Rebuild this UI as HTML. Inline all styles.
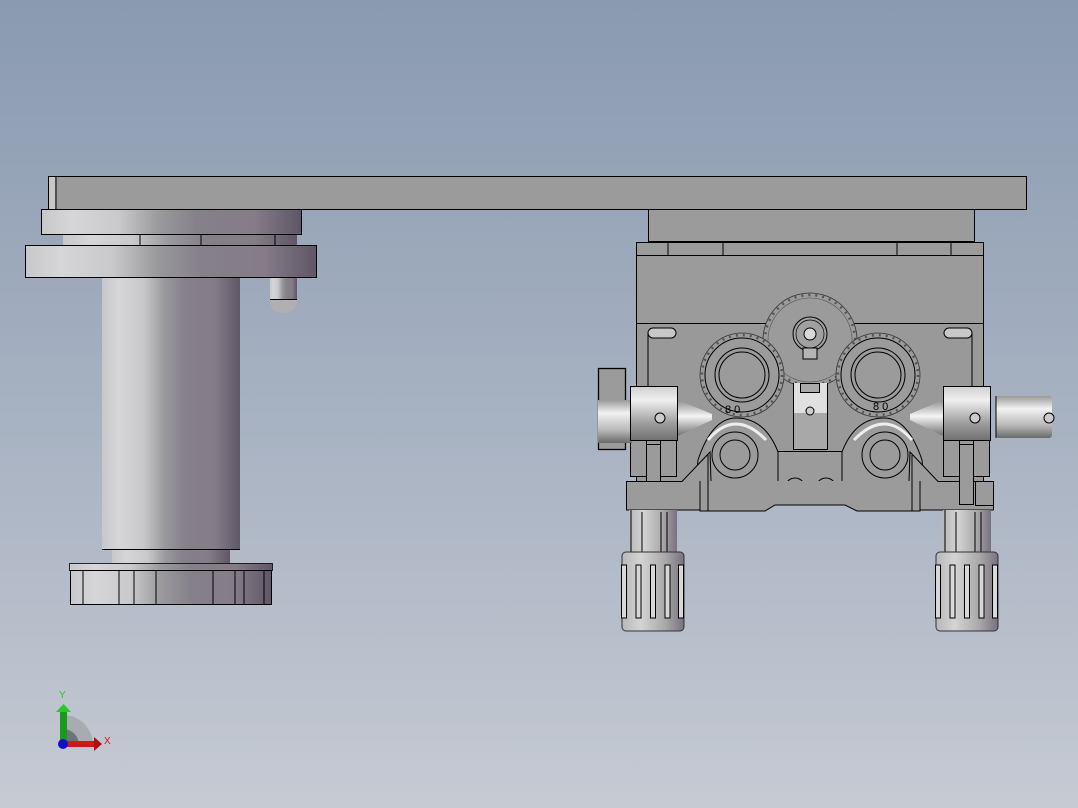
<!DOCTYPE html>
<html><head><meta charset="utf-8"><style>
html,body{margin:0;padding:0;width:1078px;height:808px;overflow:hidden}
svg{display:block}
text{font-family:"Liberation Sans",sans-serif}
</style></head><body>
<svg width="1078" height="808" viewBox="0 0 1078 808" xmlns="http://www.w3.org/2000/svg">
<defs>
<linearGradient id="bg" x1="0" y1="0" x2="0" y2="1">
<stop offset="0" stop-color="#8a9ab0"/><stop offset="0.5" stop-color="#a6b1c1"/><stop offset="1" stop-color="#c6cad3"/></linearGradient>
<linearGradient id="cyl" x1="0" y1="0" x2="1" y2="0">
<stop offset="0" stop-color="#c8c8ca"/><stop offset="0.12" stop-color="#d6d6d8"/><stop offset="0.3" stop-color="#c9c9cb"/><stop offset="0.45" stop-color="#9a9a9c"/><stop offset="0.6" stop-color="#85808a"/><stop offset="0.82" stop-color="#857c88"/><stop offset="1" stop-color="#5f5667"/></linearGradient>
<linearGradient id="shaft" x1="0" y1="0" x2="0" y2="1">
<stop offset="0" stop-color="#9a9a9a"/><stop offset="0.3" stop-color="#f2f2f2"/><stop offset="0.7" stop-color="#b8b8b8"/><stop offset="1" stop-color="#6a6a6a"/></linearGradient>
<linearGradient id="clamp" x1="0" y1="0" x2="0" y2="1">
<stop offset="0" stop-color="#d0d0d0"/><stop offset="0.25" stop-color="#f0f0f0"/><stop offset="0.7" stop-color="#9a9a9a"/><stop offset="1" stop-color="#707070"/></linearGradient>
<linearGradient id="cone" x1="0" y1="0" x2="0" y2="1">
<stop offset="0" stop-color="#909090"/><stop offset="0.45" stop-color="#f4f4f4"/><stop offset="1" stop-color="#707070"/></linearGradient>
<linearGradient id="knob" x1="0" y1="0" x2="1" y2="0">
<stop offset="0" stop-color="#b8b8b8"/><stop offset="0.3" stop-color="#d4d4d4"/><stop offset="0.7" stop-color="#a8a8a8"/><stop offset="1" stop-color="#7a7080"/></linearGradient>
</defs>
<rect width="1078" height="808" fill="url(#bg)"/>

<rect x="48.5" y="176.5" width="978" height="33" fill="#9b9b9b" stroke="#000"/>
<line x1="56" y1="177" x2="56" y2="209" stroke="#000"/>
<rect x="49" y="177" width="6" height="32" fill="#c8c8c8"/>

<rect x="41.5" y="209.5" width="260" height="25" fill="url(#cyl)" stroke="#000"/>
<rect x="63" y="235" width="234" height="10" fill="url(#cyl)"/>
<line x1="140" y1="235" x2="140" y2="245" stroke="#000"/>
<line x1="201" y1="235" x2="201" y2="245" stroke="#000"/>
<line x1="275" y1="235" x2="275" y2="245" stroke="#000"/>
<rect x="25.5" y="245.5" width="291" height="32" fill="url(#cyl)" stroke="#000"/>
<rect x="270" y="278" width="27" height="22" fill="url(#cyl)"/>
<path d="M270 300 L297 300 Q297 313 283 313 Q270 313 270 300Z" fill="#b0b0b2"/>
<line x1="270" y1="299.5" x2="297" y2="299.5" stroke="#000"/>
<rect x="102" y="278" width="138" height="271" fill="url(#cyl)"/>
<line x1="102" y1="549.5" x2="240" y2="549.5" stroke="#000"/>
<rect x="112" y="550" width="118" height="13" fill="url(#cyl)"/>
<rect x="69.5" y="563.5" width="203" height="7" fill="url(#cyl)" stroke="#000" stroke-width="0.8"/>
<rect x="70.5" y="570.5" width="201" height="34" fill="url(#cyl)" stroke="#000"/>
<g stroke="#000"><line x1="83" y1="571" x2="83" y2="604"/><line x1="119" y1="571" x2="119" y2="604"/><line x1="134" y1="571" x2="134" y2="604"/><line x1="156" y1="571" x2="156" y2="604"/><line x1="213" y1="571" x2="213" y2="604"/><line x1="235" y1="571" x2="235" y2="604"/><line x1="244" y1="571" x2="244" y2="604"/><line x1="264" y1="571" x2="264" y2="604"/></g>

<rect x="648.5" y="209.5" width="326" height="32" fill="#9b9b9b" stroke="#000"/>
<rect x="636.5" y="242.5" width="347" height="13" fill="#9b9b9b" stroke="#000"/>
<g stroke="#000"><line x1="668" y1="243" x2="668" y2="255"/><line x1="723" y1="243" x2="723" y2="255"/><line x1="897" y1="243" x2="897" y2="255"/><line x1="951" y1="243" x2="951" y2="255"/></g>
<rect x="636.5" y="255.5" width="347" height="70" fill="#9b9b9b" stroke="#000"/>
<rect x="636.5" y="323.5" width="347" height="160" fill="#999" stroke="#000"/>
<rect x="648" y="328" width="28" height="10" rx="5" fill="#c8c8c8" stroke="#000"/>
<rect x="944" y="328" width="28" height="10" rx="5" fill="#c8c8c8" stroke="#000"/>
<line x1="648" y1="333" x2="648" y2="386" stroke="#000"/><line x1="972" y1="333" x2="972" y2="386" stroke="#000"/>
<circle cx="810" cy="340" r="47" fill="#9b9b9b" stroke="#333" stroke-width="0.8"/>
<circle cx="810" cy="340" r="45" fill="none" stroke="#555" stroke-width="2.5" stroke-dasharray="2 5"/>
<circle cx="810" cy="340" r="42" fill="none" stroke="#555" stroke-width="0.6"/>
<circle cx="810" cy="334" r="17" fill="#a0a0a0" stroke="#000"/>
<circle cx="810" cy="334" r="14" fill="none" stroke="#000" stroke-width="0.7"/>
<circle cx="810" cy="334" r="6" fill="#d8d8d8" stroke="#000"/>
<rect x="803" y="348" width="14" height="11" fill="#b5b5b5" stroke="#000"/>
<g fill="#9b9b9b" stroke="#333" stroke-width="0.8">
<circle cx="742" cy="375" r="42"/><circle cx="878" cy="375" r="42"/></g>
<g fill="none" stroke="#555" stroke-width="2.5" stroke-dasharray="2 5"><circle cx="742" cy="375" r="40"/><circle cx="878" cy="375" r="40"/></g>
<g fill="#9b9b9b" stroke="#000"><circle cx="742" cy="375" r="37"/><circle cx="878" cy="375" r="37"/><circle cx="742" cy="375" r="27"/><circle cx="878" cy="375" r="27"/><circle cx="742" cy="375" r="23"/><circle cx="878" cy="375" r="23"/></g>
<text x="725" y="413" font-size="11" fill="#000">8 0</text>
<text x="873" y="410" font-size="11" fill="#000">8 0</text>
<rect x="793.5" y="383.5" width="34" height="66" fill="#a8a8a8" stroke="#000"/>
<rect x="794" y="383" width="33" height="30" fill="#e0e0e0"/>
<rect x="800.5" y="383.5" width="19" height="9" fill="#aaa" stroke="#000"/>
<circle cx="810" cy="411" r="4" fill="#ccc" stroke="#000"/>
<rect x="775.5" y="451.5" width="80" height="52" fill="#9b9b9b" stroke="#000"/>
<g fill="#9b9b9b" stroke="#000"><path d="M695 490 L698 460 Q712 418 736 418 Q765 418 778 452 L778 505 L718 505 Z"/>
<path d="M925 490 L922 460 Q908 418 884 418 Q855 418 842 452 L842 505 L902 505 Z"/></g>
<path d="M708 440 Q735 408 766 440" fill="none" stroke="#eee" stroke-width="3"/>
<path d="M854 440 Q885 408 912 440" fill="none" stroke="#eee" stroke-width="3"/>
<g fill="#9b9b9b" stroke="#000"><circle cx="735" cy="455" r="23"/><circle cx="735" cy="455" r="15"/><circle cx="885" cy="455" r="23"/><circle cx="885" cy="455" r="15"/>
<circle cx="795" cy="488" r="10"/><circle cx="826" cy="488" r="10"/><circle cx="795" cy="488" r="6"/><circle cx="826" cy="488" r="6"/></g>
<path d="M626.5 481.5 L682 481.5 L710 452 L712 510 L626.5 510 Z" fill="#9b9b9b" stroke="#000"/>
<path d="M993.5 481.5 L938 481.5 L910 452 L908 510 L993.5 510 Z" fill="#9b9b9b" stroke="#000"/>
<path d="M700 481 L700 511 L765 511 L775 505 L845 505 L857 511 L920 511 L920 481" fill="#9b9b9b" stroke="#000"/>
<line x1="708" y1="455" x2="708" y2="511" stroke="#000"/><line x1="912" y1="455" x2="912" y2="511" stroke="#000"/>
<rect x="630.5" y="440.5" width="16" height="36" fill="#9b9b9b" stroke="#000"/>
<rect x="660.5" y="440.5" width="16" height="36" fill="#9b9b9b" stroke="#000"/>
<rect x="646.5" y="444.5" width="14" height="37" fill="#9b9b9b" stroke="#000"/>
<rect x="943.5" y="440.5" width="16" height="36" fill="#9b9b9b" stroke="#000"/>
<rect x="973.5" y="440.5" width="16" height="36" fill="#9b9b9b" stroke="#000"/>
<rect x="959.5" y="444.5" width="14" height="60" fill="#9b9b9b" stroke="#000"/>
<rect x="975.5" y="481.5" width="18" height="24" fill="#9b9b9b" stroke="#000"/>
<rect x="598.5" y="368.5" width="27" height="81" fill="#9b9b9b" stroke="#000" stroke-width="1.3"/>
<rect x="598" y="400" width="34" height="43" fill="url(#shaft)"/>
<rect x="630.5" y="386.5" width="47" height="54" fill="url(#clamp)" stroke="#000"/>
<polygon points="678,400 712,414 712,420 678,436" fill="url(#cone)"/>
<circle cx="660" cy="418" r="5" fill="#ccc" stroke="#000"/>
<rect x="943.5" y="386.5" width="47" height="54" fill="url(#clamp)" stroke="#000"/>
<polygon points="943,400 910,414 910,420 943,436" fill="url(#cone)"/>
<circle cx="975" cy="418" r="5" fill="#ccc" stroke="#000"/>
<rect x="996" y="396" width="56" height="42" rx="3" fill="url(#shaft)"/>
<line x1="996" y1="396" x2="996" y2="438" stroke="#000"/>
<circle cx="1049" cy="418" r="5" fill="#ccc" stroke="#000"/>
<rect x="629" y="510" width="48" height="43" fill="url(#knob)"/>
<g stroke="#000"><line x1="631" y1="510" x2="631" y2="553"/><line x1="642" y1="512" x2="642" y2="553"/><line x1="661" y1="512" x2="661" y2="553"/><line x1="667" y1="512" x2="667" y2="553"/></g>
<rect x="943" y="510" width="48" height="43" fill="url(#knob)"/>
<g stroke="#000"><line x1="945" y1="510" x2="945" y2="553"/><line x1="956" y1="512" x2="956" y2="553"/><line x1="975" y1="512" x2="975" y2="553"/><line x1="981" y1="512" x2="981" y2="553"/></g>
<g>
<rect x="622" y="552" width="62" height="79" rx="4" fill="url(#knob)" stroke="#333"/>
<g fill="#d8d8d8" stroke="#000"><rect x="621.5" y="565" width="5" height="53"/><rect x="636" y="565" width="5" height="53"/><rect x="650.5" y="565" width="5" height="53"/><rect x="665" y="565" width="5" height="53"/><rect x="678.5" y="565" width="5" height="53"/></g>
<rect x="936" y="552" width="62" height="79" rx="4" fill="url(#knob)" stroke="#333"/>
<g fill="#d8d8d8" stroke="#000"><rect x="935.5" y="565" width="5" height="53"/><rect x="950" y="565" width="5" height="53"/><rect x="964.5" y="565" width="5" height="53"/><rect x="979" y="565" width="5" height="53"/><rect x="992.5" y="565" width="5" height="53"/></g>
</g>

<path d="M63 715 A30 30 0 0 1 93 745 L63 745Z" fill="#a8abb0"/>
<path d="M63 729 A16 16 0 0 1 79 745 L63 745Z" fill="#6f7277"/>
<rect x="60" y="710" width="7" height="35" fill="#1a9a1a"/>
<polygon points="56,712 71,712 63.5,704" fill="#22cc22"/>
<rect x="63" y="741" width="32" height="6" fill="#d01818"/>
<polygon points="94,737 94,751 102,744" fill="#aa1010"/>
<circle cx="63" cy="744" r="5" fill="#1010c8"/>
<text x="59" y="698" font-size="10" fill="#22cc22">Y</text>
<text x="104" y="744" font-size="10" fill="#dd1111">X</text>
</svg>
</body></html>
